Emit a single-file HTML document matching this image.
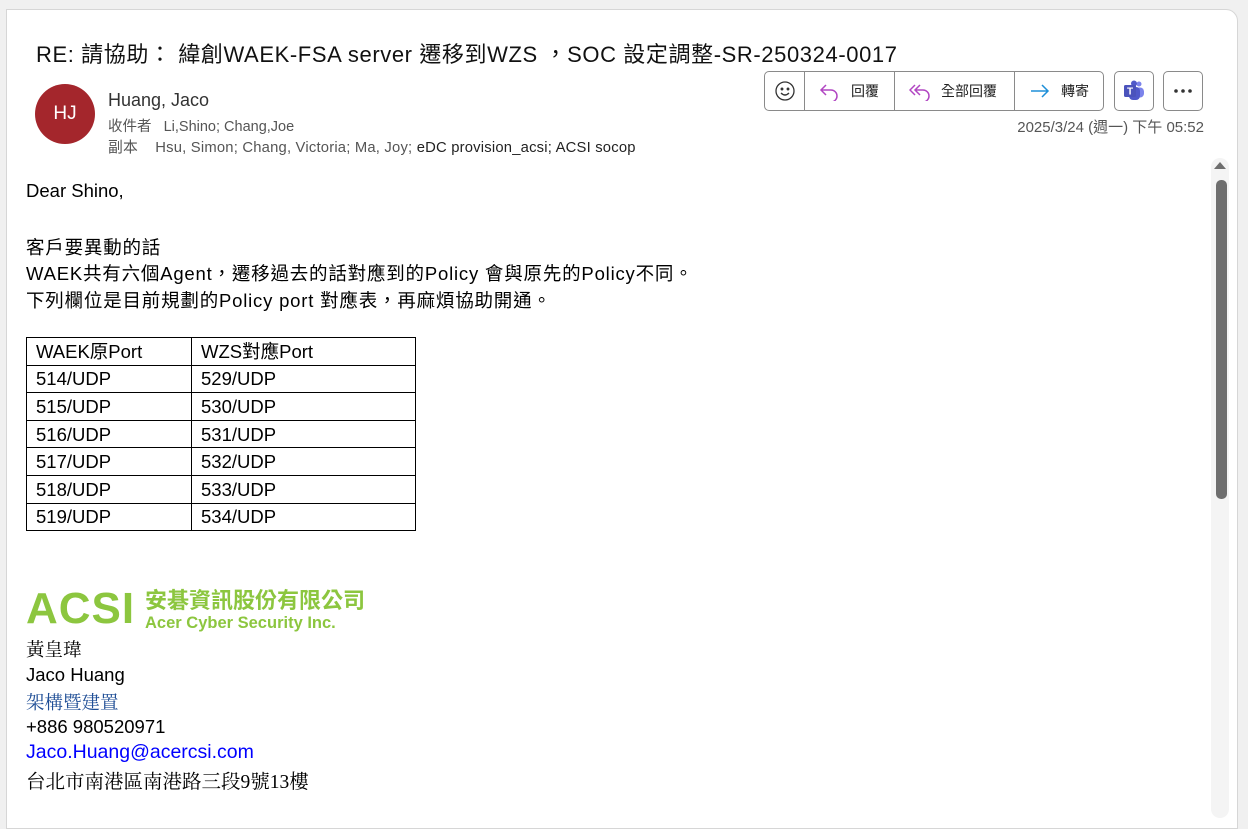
<!DOCTYPE html>
<html><head><meta charset="utf-8"><style>
*{margin:0;padding:0;box-sizing:border-box}
body{width:1248px;height:814px;background:#f0f0f0;position:relative;overflow:hidden;font-family:"Liberation Sans","Noto Sans CJK TC",sans-serif;color:#000}
.panel{position:absolute;left:6px;top:9px;width:1232px;height:820px;background:#fff;border:1px solid #d6d6d6;border-top-right-radius:12px}
.abs{position:absolute;white-space:nowrap}
.title{left:36px;top:37px;font-size:22px;color:#111;letter-spacing:0.6px}
.av{left:35px;top:84px;width:60px;height:60px;border-radius:50%;background:#a4262c;color:#fff;font-size:19px;text-align:center;line-height:60px}
.g{color:#555;font-size:14.5px}
.tb{left:764px;top:71px;height:40px;border:1px solid #8a8a8a;border-radius:5px;display:flex;background:#fff}
.tb div{border-right:1px solid #8a8a8a;display:flex;align-items:center;font-size:14px;color:#222}
.tb div:last-child{border-right:none}
.sb{position:absolute;border:1px solid #8a8a8a;border-radius:5px;width:40px;height:40px;top:71px;display:flex;align-items:center;justify-content:center;background:#fff}
.body{left:26px;font-size:18.5px;color:#000}
.cj{letter-spacing:0.8px}
table{position:absolute;left:26px;top:337px;border-collapse:collapse;font-size:18.5px}
td{border:1px solid #000;height:27.6px;padding:0 0 0 9px;line-height:25px;vertical-align:middle}
td:first-child{width:165px}td:last-child{width:224px}
.serif{font-family:"Liberation Serif","Noto Serif CJK SC",serif}
</style></head><body>
<div class="panel"></div>
<div class="abs title">RE: 請協助： 緯創WAEK-FSA server 遷移到WZS ，SOC 設定調整-SR-250324-0017</div>
<div class="abs av">HJ</div>
<div class="abs" style="left:108px;top:90px;font-size:18px;color:#333">Huang, Jaco</div>
<div class="abs g" style="left:108px;top:115px">收件者 &nbsp;&nbsp;Li,Shino; Chang,Joe</div>
<div class="abs g" style="left:108px;top:136px;font-size:14.8px;letter-spacing:0.2px">副本 &nbsp;&nbsp;&nbsp;Hsu, Simon; Chang, Victoria; Ma, Joy; <span style="color:#222">eDC provision_acsi; ACSI socop</span></div>
<div class="abs tb">
<div style="width:40px;justify-content:center"><svg width="22" height="22" viewBox="0 0 22 22" fill="none" stroke="#333" stroke-width="1.3"><circle cx="11" cy="11" r="9"/><circle cx="8" cy="9" r=".8" fill="#333"/><circle cx="14" cy="9" r=".8" fill="#333"/><path d="M7 13q4 4 8 0"/></svg></div>
<div style="width:90px;padding-left:14px"><svg width="22" height="20" viewBox="0 0 22 20" fill="none" stroke="#b146c2" stroke-width="1.5"><path d="M7 4L2 9l5 5M2 9h10a6 6 0 0 1 0 12"/></svg><span style="margin-left:10px">回覆</span></div>
<div style="width:120px;padding-left:14px"><svg width="24" height="20" viewBox="0 0 24 20" fill="none" stroke="#b146c2" stroke-width="1.5"><path d="M6 4L1 9l5 5M11 4L6 9l5 5M6 9h8a6 6 0 0 1 0 12"/></svg><span style="margin-left:8px">全部回覆</span></div>
<div style="width:88px;padding-left:14px"><svg width="22" height="20" viewBox="0 0 22 20" fill="none" stroke="#1e8fd8" stroke-width="1.5"><path d="M2 10h17M13 4l6 6-6 6"/></svg><span style="margin-left:10px">轉寄</span></div>
</div>
<div class="sb" style="left:1114px"><svg width="24" height="24" viewBox="0 0 24 24"><circle cx="17" cy="5" r="2.5" fill="#7b83eb"/><rect x="13" y="8.5" width="9" height="10" rx="4" fill="#7b83eb"/><circle cx="12" cy="4.5" r="3" fill="#5059c9"/><rect x="7" y="8" width="11" height="13" rx="4" fill="#5059c9"/><rect x="2" y="6" width="12" height="12" rx="1.5" fill="#4b53bc"/><text x="8" y="15.5" font-size="10" font-weight="bold" fill="#fff" text-anchor="middle" font-family="Liberation Sans">T</text></svg></div>
<div class="sb" style="left:1163px"><svg width="20" height="6" viewBox="0 0 20 6"><circle cx="3" cy="3" r="1.8" fill="#333"/><circle cx="10" cy="3" r="1.8" fill="#333"/><circle cx="17" cy="3" r="1.8" fill="#333"/></svg></div>
<div class="abs g" style="right:44px;top:116px;font-size:15px">2025/3/24 (週一) 下午 05:52</div>
<div class="abs" style="left:1211px;top:158px;width:18px;height:660px;background:#f4f4f4;border-radius:9px"></div>
<div class="abs" style="left:1214px;top:162px;width:0;height:0;border-left:6px solid transparent;border-right:6px solid transparent;border-bottom:7px solid #6e6e6e"></div>
<div class="abs" style="left:1216px;top:180px;width:11px;height:319px;background:#6e6e6e;border-radius:5px"></div>
<div class="abs body" style="top:180px">Dear Shino,</div>
<div class="abs body cj" style="top:234px">客戶要異動的話</div>
<div class="abs body cj" style="top:260px">WAEK共有六個Agent，遷移過去的話對應到的Policy 會與原先的Policy不同。</div>
<div class="abs body cj" style="top:287px">下列欄位是目前規劃的Policy port 對應表，再麻煩協助開通。</div>
<table>
<tr><td>WAEK原Port</td><td>WZS對應Port</td></tr>
<tr><td>514/UDP</td><td>529/UDP</td></tr>
<tr><td>515/UDP</td><td>530/UDP</td></tr>
<tr><td>516/UDP</td><td>531/UDP</td></tr>
<tr><td>517/UDP</td><td>532/UDP</td></tr>
<tr><td>518/UDP</td><td>533/UDP</td></tr>
<tr><td>519/UDP</td><td>534/UDP</td></tr>
</table>
<div class="abs" style="left:26px;top:585px;font-size:44px;font-weight:bold;color:#8cc63f;letter-spacing:1px;line-height:48px">ACSI</div>
<div class="abs" style="left:145px;top:589px;font-size:22px;font-weight:bold;color:#8cc63f;line-height:24px">安碁資訊股份有限公司</div>
<div class="abs" style="left:145px;top:614px;font-size:16.5px;font-weight:bold;color:#8cc63f;line-height:18px">Acer Cyber Security Inc.</div>
<div class="abs body serif" style="top:636px">黃皇瑋</div>
<div class="abs body" style="top:664px">Jaco Huang</div>
<div class="abs body serif" style="top:689px;color:#1f4e96">架構暨建置</div>
<div class="abs body" style="top:716px">+886 980520971</div>
<div class="abs body" style="top:741px;color:#0000ff;font-size:19.5px">Jaco.Huang@acercsi.com</div>
<div class="abs body serif" style="top:766px;font-size:19.5px">台北市南港區南港路三段9號13樓</div>
</body></html>
